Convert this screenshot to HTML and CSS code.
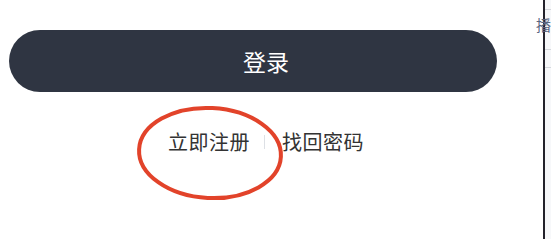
FILE: index.html
```html
<!DOCTYPE html>
<html lang="zh-CN">
<head>
    <meta charset="UTF-8">
    <meta name="viewport" content="width=device-width, initial-scale=1.0">
    <title>登录</title>
    <link rel="stylesheet" href="styles.css">
</head>
<body>
    <div class="page">
        <div class="main">
            <button type="button" class="login-btn">登录</button>
            <div class="links">
                <a href="#" class="link register">立即注册</a>
                <span class="sep"></span>
                <a href="#" class="link">找回密码</a>
            </div>
            <!-- 标注圈 -->
            <svg class="mark" width="156" height="104" viewBox="0 0 156 104">
                <ellipse cx="78" cy="52" rx="71" ry="45" transform="rotate(3 78 52)" fill="none" stroke="#e2432a" stroke-width="4"/>
            </svg>
        </div>
        <div class="divider"></div>
        <div class="side">
            <div class="side-line first"></div>
            <div class="side-title">播</div>
            <div class="side-line"></div>
            <div class="side-line second"></div>
        </div>
    </div>
</body>
</html>
```

FILE: styles.css
```css
body {
    margin: 0;
    background: #fff;
    font-family: "Noto Sans CJK SC", "Noto Sans", sans-serif;
    color: #333;
}
.page {
    display: flex;
    height: 239px;
    overflow: hidden;
}
.main {
    position: relative;
    width: 543px;
    flex-shrink: 0;
}
.login-btn {
    display: block;
    margin: 30px 0 0 9px;
    width: 488px;
    height: 62px;
    padding: 0 0 0 26px;
    border: none;
    border-radius: 31px;
    background-color: #2f3542;
    color: #fff;
    font-family: inherit;
    font-size: 23px;
    line-height: 62px;
    cursor: pointer;
}
.links {
    display: flex;
    align-items: center;
    margin: 36px 0 0 168px;
    height: 28px;
}
.link {
    color: #333;
    text-decoration: none;
    font-size: 20px;
    line-height: 28px;
    letter-spacing: 0.5px;
}
.sep {
    width: 1px;
    height: 14px;
    margin: 0 17px 0 14px;
    background: #dde0e5;
}
.mark {
    position: absolute;
    left: 132px;
    top: 101px;
}
.divider {
    width: 2px;
    background: #23222b;
    flex-shrink: 0;
}
.side {
    flex: 1;
    background: #f7f8fa;
}
.side-line {
    height: 1px;
    background: #d5d8dd;
    margin-top: 9px;
}
.side-title {
    height: 30px;
    line-height: 30px;
    font-size: 15px;
    color: #5a6680;
    margin-left: -9px;
    white-space: nowrap;
}
.side-line.second {
    margin-top: 17px;
}
```
